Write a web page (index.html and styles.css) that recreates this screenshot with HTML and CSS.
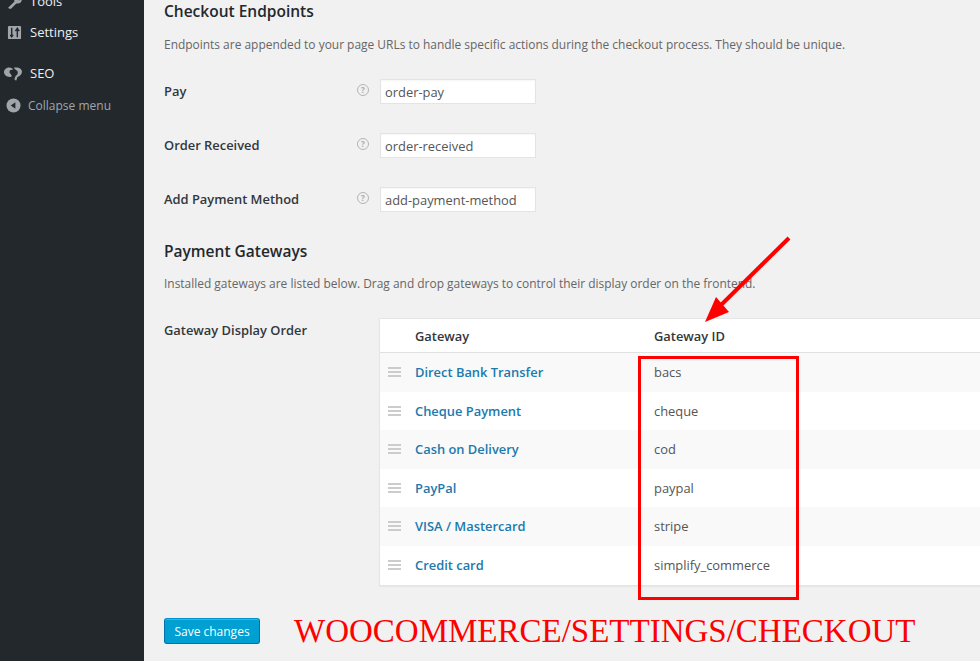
FILE: index.html
```html
<!DOCTYPE html>
<html lang="en">
<head>
<meta charset="utf-8">
<title>WooCommerce Settings</title>
<link rel="stylesheet" href="styles.css">
</head>
<body>
<div class="app">
  <nav class="sidebar">
    <div class="menu-item tools">
      <svg class="menu-icon" viewBox="0 0 16 16"><path d="M1 15l7-7c-1-3 1-6 5-6l-2 3 2 2 3-2c0 4-3 6-6 5l-6 6z" fill="#a0a5aa"/></svg>
      <span>Tools</span>
    </div>
    <div class="menu-item settings">
      <svg class="menu-icon" viewBox="0 0 16 16"><rect x="1" y="1" width="14" height="14" rx="1" fill="#a0a5aa"/><path d="M5 3v9M3.500 10.500L5 12.500l1.500-2M11 13V4M9 6.500L11 3.500l2 3" stroke="#23282d" stroke-width="1.500" fill="none"/></svg>
      <span>Settings</span>
    </div>
    <div class="menu-item seo">
      <svg class="menu-icon seo-icon" viewBox="0 0 20 16"><path d="M0 6.500C0 3 3.500 1 7 1.500c1.500.2 2.500.8 3 2L6.500 4.500 6 7l2.500 3-.5 2C4 12 0 10 0 6.500zM11 1.500c4-1 9 .5 9 4.500 0 3-2.500 5-5 6l-1.500 4-2-1.500 1.500-4c2-1 3-3 2-5-.8-1.500-3-2-4-4z" fill="#a0a5aa"/></svg>
      <span>SEO</span>
    </div>
    <div class="menu-item collapse">
      <svg class="menu-icon" viewBox="0 0 16 16"><circle cx="8" cy="8" r="7.500" fill="#a0a5aa"/><path d="M10 4.500v7L5 8z" fill="#23282d"/></svg>
      <span>Collapse menu</span>
    </div>
  </nav>

  <main class="content">
    <h2 class="section-title first">Checkout Endpoints</h2>
    <p class="desc">Endpoints are appended to your page URLs to handle specific actions during the checkout process. They should be unique.</p>

    <div class="form-row">
      <label class="form-label">Pay</label>
      <span class="help">?</span>
      <input class="text-input" type="text" value="order-pay">
    </div>
    <div class="form-row">
      <label class="form-label">Order Received</label>
      <span class="help">?</span>
      <input class="text-input" type="text" value="order-received">
    </div>
    <div class="form-row">
      <label class="form-label">Add Payment Method</label>
      <span class="help">?</span>
      <input class="text-input" type="text" value="add-payment-method">
    </div>

    <h2 class="section-title second">Payment Gateways</h2>
    <p class="desc">Installed gateways are listed below. Drag and drop gateways to control their display order on the frontend.</p>

    <div class="gateway-row">
      <div class="gateway-label">Gateway Display Order</div>
      <div class="gateway-table">
        <div class="thead">
          <span class="col-handle"></span>
          <span class="col-name">Gateway</span>
          <span class="col-id">Gateway ID</span>
        </div>
        <div class="trow alt"><span class="col-handle"><i class="handle"></i></span><a class="col-name link">Direct Bank Transfer</a><span class="col-id">bacs</span></div>
        <div class="trow"><span class="col-handle"><i class="handle"></i></span><a class="col-name link">Cheque Payment</a><span class="col-id">cheque</span></div>
        <div class="trow alt"><span class="col-handle"><i class="handle"></i></span><a class="col-name link">Cash on Delivery</a><span class="col-id">cod</span></div>
        <div class="trow"><span class="col-handle"><i class="handle"></i></span><a class="col-name link">PayPal</a><span class="col-id">paypal</span></div>
        <div class="trow alt"><span class="col-handle"><i class="handle"></i></span><a class="col-name link">VISA / Mastercard</a><span class="col-id">stripe</span></div>
        <div class="trow"><span class="col-handle"><i class="handle"></i></span><a class="col-name link">Credit card</a><span class="col-id">simplify_commerce</span></div>
      </div>
    </div>

    <div class="actions">
      <button class="save" type="button">Save changes</button>
      <div class="annotation">WOOCOMMERCE/SETTINGS/CHECKOUT</div>
    </div>
  </main>

  <div class="red-box"></div>
  <svg class="arrow" viewBox="0 0 980 661"><path d="M789 238L717 309" stroke="#f00" stroke-width="4" fill="none"/><path d="M705 322L716 297L729 312z" fill="#f00"/></svg>
</div>
</body>
</html>
```
FILE: styles.css
```css
* { box-sizing: border-box; }
html, body { margin: 0; padding: 0; height: 100%; overflow: hidden; }
body { background: #f1f1f1; font-family: "Open Sans", sans-serif; font-size: 12.900px; color: #444; }
.app { position: relative; display: flex; width: 980px; height: 661px; overflow: hidden; }

.sidebar { flex: 0 0 144px; width: 144px; background: #23282d; color: #eee; }
.menu-item { display: flex; align-items: center; height: 20px; font-size: 13px; }
.menu-item span { line-height: 20px; }
.menu-icon { width: 15px; height: 15px; margin-left: 7px; margin-right: 8px; flex: none; }
.tools { margin-top: -9px; }
.settings { margin-top: 11px; }
.seo { margin-top: 21px; }
.seo-icon { width: 18px; height: 15px; margin-left: 4px; margin-right: 8px; }
.collapse { margin-top: 12px; padding-top: 1px; font-size: 12px; color: #a0a5aa; }
.collapse .menu-icon { margin-left: 6px; margin-right: 7px; }

.content { flex: 1; min-width: 0; padding-left: 20px; }
.section-title { margin: 0; font-size: 15.500px; font-weight: 600; line-height: 20px; color: #23282d; }
.section-title.first { margin-top: 1px; }
.section-title.second { margin-top: 29px; }
.desc { margin: 14px 0 0; font-size: 11.950px; line-height: 20px; color: #666; white-space: nowrap; }
.second + .desc { margin-top: 13px; }

.form-row { display: flex; align-items: center; height: 25px; margin-top: 29px; }
.desc + .form-row { margin-top: 24px; }
.form-label { width: 193px; margin-top: -2px; font-size: 12.900px; font-weight: 600; color: #32373c; }
.help { width: 12px; height: 12px; margin-right: 11px; margin-top: -3px; border: 1.500px solid #b5b5b5; border-radius: 50%; font-size: 8px; font-weight: 700; line-height: 9px; text-align: center; color: #aaa; }
.text-input { width: 156px; height: 25px; padding: 0 4px; border: 1px solid #e4e4e4; background: #fff; font-family: "Open Sans", sans-serif; font-size: 12.900px; color: #555; box-shadow: inset 0 1px 2px rgba(0,0,0,.04); }

.gateway-row { display: flex; margin-top: 24px; }
.gateway-label { flex: 0 0 215px; width: 215px; padding-top: 3px; font-size: 12.900px; font-weight: 600; color: #32373c; line-height: 18px; }
.gateway-table { width: 620px; flex: none; padding-bottom: 1px; background: #fff; border: 1px solid #e5e5e5; border-right: 0; box-shadow: 0 1px 1px rgba(0,0,0,.04); }
.thead { display: flex; align-items: center; height: 34px; border-bottom: 1px solid #e1e1e1; font-weight: 600; color: #32373c; }
.trow { display: flex; align-items: center; height: 38.500px; color: #555; }
.trow.alt { background: #f9f9f9; }
.col-handle { width: 35px; display: flex; align-items: center; justify-content: flex-end; padding-right: 14px; flex: none; }
.col-name { width: 239px; flex: none; }
.link { color: #2079ad; font-weight: 600; }
.handle { display: block; width: 13px; height: 10px; border-top: 2px solid #ccc; border-bottom: 2px solid #ccc; position: relative; }
.handle::after { content: ""; position: absolute; left: 0; right: 0; top: 2px; height: 2px; background: #ccc; }

.actions { display: flex; align-items: center; margin-top: 30px; }
.save { width: 96px; height: 26px; padding: 0; border: 1px solid #0073aa; border-color: #0091cd #0073aa #0073aa; border-radius: 3px; background: #00a0d2; color: #fff; font-family: "Open Sans", sans-serif; font-size: 12px; box-shadow: 0 1px 0 rgba(120,200,230,.5) inset; }
.annotation { margin-left: 34px; font-family: "Liberation Serif", serif; font-size: 33px; line-height: 30px; color: #f00; white-space: nowrap; }

.red-box { position: absolute; left: 638px; top: 356px; width: 161px; height: 244px; border: 3px solid #f00; }
.arrow { position: absolute; left: 0; top: 0; width: 980px; height: 661px; pointer-events: none; }
```
